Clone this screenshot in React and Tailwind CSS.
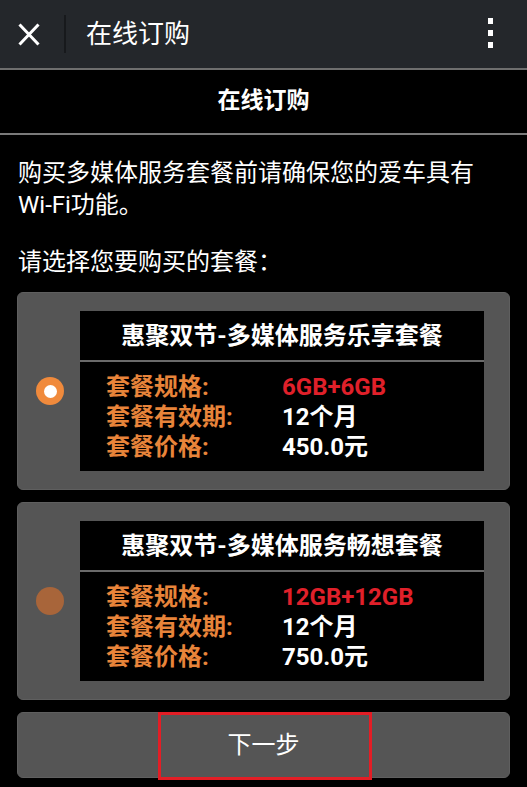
import { useState } from "react";

const plans = [
  { title: "惠聚双节-多媒体服务乐享套餐", spec: "6GB+6GB", period: "12个月", price: "450.0元" },
  { title: "惠聚双节-多媒体服务畅想套餐", spec: "12GB+12GB", period: "12个月", price: "750.0元" },
];

function PlanCard({ plan, selected, onSelect }) {
  return (
    <div
      onClick={onSelect}
      className="flex items-center h-[198px] bg-[#555555] border border-[#5f5f5f] rounded-[6px] cursor-pointer"
    >
      {/* radio */}
      <div className="w-[62px] flex justify-center shrink-0 pl-[2px]">
        {selected ? (
          <div className="w-[28px] h-[28px] rounded-full bg-[#f08a3c] flex items-center justify-center">
            <div className="w-[13px] h-[13px] rounded-full bg-white" />
          </div>
        ) : (
          <div className="w-[28px] h-[28px] rounded-full bg-[#a8653a]" />
        )}
      </div>

      <div className="flex-1 mr-[25px] h-[160px] bg-black flex flex-col">
        <div className="h-[49px] flex items-center justify-center text-white font-bold text-[24px]">
          {plan.title}
        </div>
        <div className="h-[2px] bg-[#6a6a6a]" />
        <div className="pt-[10px] pl-[26px] text-[24px] leading-[30px] font-bold">
          <div className="flex">
            <span className="w-[176px] text-[#e8843a]">套餐规格:</span>
            <span className="text-[#e0202a]">{plan.spec}</span>
          </div>
          <div className="flex">
            <span className="w-[176px] text-[#e8843a]">套餐有效期:</span>
            <span className="text-white">{plan.period}</span>
          </div>
          <div className="flex">
            <span className="w-[176px] text-[#e8843a]">套餐价格:</span>
            <span className="text-white">{plan.price}</span>
          </div>
        </div>
      </div>
    </div>
  );
}

export default function App() {
  const [selected, setSelected] = useState(0);

  return (
    <div
      className="w-[527px] h-[787px] bg-black overflow-hidden"
      style={{ fontFamily: 'Roboto, "Noto Sans CJK SC", sans-serif' }}
    >
      {/* top bar */}
      <div className="h-[70px] bg-[#24272b] border-b-2 border-[#6e6e6e] flex items-center">
        <svg className="ml-[18px] w-[22px] h-[23px]" viewBox="0 0 22 23" fill="none" stroke="white" strokeWidth="3">
          <path d="M1.5 1.5 L20.5 21.5 M20.5 1.5 L1.5 21.5" />
        </svg>
        <div className="ml-[24px] w-[2px] h-[38px] bg-[#17191c]" />
        <span className="ml-[20px] text-white text-[26px]">在线订购</span>
        <div className="ml-auto mr-[34px] flex flex-col gap-[6px] mt-[-2px]">
          <div className="w-[5px] h-[6px] bg-white" />
          <div className="w-[5px] h-[6px] bg-white" />
          <div className="w-[5px] h-[6px] bg-white" />
        </div>
      </div>

      {/* page header */}
      <div className="h-[65px] border-b-2 border-[#7a7a7a] flex items-center justify-center">
        <span className="text-white font-bold text-[23px]">在线订购</span>
      </div>

      <div className="px-[17px]">
        <p className="pt-[22px] pl-[1px] text-white text-[24px] leading-[32px]">
          购买多媒体服务套餐前请确保您的爱车具有
          <br />
          Wi-Fi功能。
        </p>
        <p className="mt-[25px] pl-[1px] text-white text-[24px] leading-[32px]">请选择您要购买的套餐：</p>

        <div className="mt-[14px] flex flex-col gap-[12px]">
          {plans.map((p, i) => (
            <PlanCard key={i} plan={p} selected={selected === i} onSelect={() => setSelected(i)} />
          ))}
        </div>

        <button className="relative mt-[12px] w-full h-[66px] bg-[#555555] border border-[#5f5f5f] rounded-[6px] text-white text-[24px]">
          下一步
          <span className="absolute left-[140px] top-[-1px] w-[214px] h-[68px] border-[3px] border-[#e31d25]" />
        </button>
      </div>
    </div>
  );
}
